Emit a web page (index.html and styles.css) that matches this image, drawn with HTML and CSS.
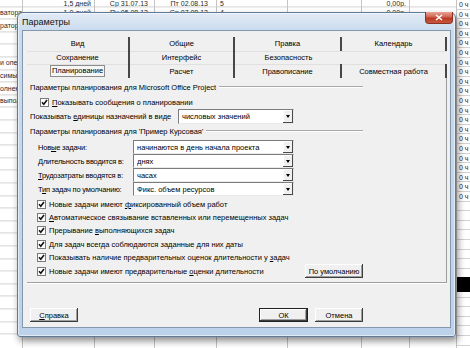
FILE: index.html
```html
<!DOCTYPE html>
<html lang="ru">
<head>
	<meta charset="UTF-8">
	<title>Параметры</title>
	<link rel="stylesheet" href="styles.css">
</head>
<body>
<div class="sheet">
	<div class="col col-a">
		<div class="cell top"></div>
		<div class="cell">ватора</div>
		<div class="cell">ратора</div>
		<div class="cell"></div>
		<div class="cell"></div>
		<div class="cell">и опер</div>
		<div class="cell">симых</div>
		<div class="cell">олнен</div>
		<div class="cell">выпол</div>
	</div>
	<div class="col col-b">
		<div class="cell top r">1,5 дней</div>
		<div class="cell r">1,0 дней</div>
	</div>
	<div class="col col-c">
		<div class="cell top r">Ср 31.07.13</div>
		<div class="cell r">Пн 05.08.13</div>
	</div>
	<div class="col col-d">
		<div class="cell top r">Пт 02.08.13</div>
		<div class="cell r">Ср 07.08.13</div>
	</div>
	<div class="col col-e">
		<div class="cell top">5</div>
		<div class="cell">4</div>
	</div>
	<div class="col col-f"></div>
	<div class="col col-g">
		<div class="cell top r">0,00р.</div>
		<div class="cell r">0,00р.</div>
	</div>
	<div class="col col-h"></div>
	<div class="col col-i">
		<div class="hc">0 ч</div><div class="hc">0 ч</div><div class="hc">0 ч</div>
		<div class="hc">0 ч</div><div class="hc">0 ч</div><div class="hc">0 ч</div>
		<div class="hc">0 ч</div><div class="hc">0 ч</div><div class="hc">0 ч</div>
		<div class="hc">0 ч</div><div class="hc">0 ч</div><div class="hc">0 ч</div>
		<div class="hc">0 ч</div><div class="hc">0 ч</div><div class="hc">0 ч</div>
		<div class="hc">0 ч</div><div class="hc">0 ч</div><div class="hc">0 ч</div>
		<div class="hc">0 ч</div><div class="hc">0 ч</div><div class="hc">0 ч</div>
		<div class="black"></div>
	</div>
</div>

<div class="dialog">
	<div class="titlebar">
		<span class="title">Параметры</span>
		<span class="close"><svg width="8" height="7" viewBox="0 0 8 7"><path d="M1 1l6 5M7 1l-6 5" stroke="#fff" stroke-width="1.6"/></svg></span>
	</div>
	<div class="client">
		<div class="tabs">
			<div class="tab sep line">Вид</div>
			<div class="tab sep line">Общие</div>
			<div class="tab sep line">Правка</div>
			<div class="tab sep line">Календарь</div>
			<div class="tab sep line">Сохранение</div>
			<div class="tab sep line">Интерфейс</div>
			<div class="tab line">Безопасность</div>
			<div class="tab line"></div>
			<div class="tab sep"><span class="current">Планирование</span></div>
			<div class="tab sep">Расчет</div>
			<div class="tab sep">Правописание</div>
			<div class="tab sep">Совместная работа</div>
		</div>

		<div class="panel">
			<div class="group"><span>Параметры планирования для Microsoft Office Project</span><i class="rule"></i></div>
			<div class="check first">
				<svg class="cb" width="9" height="9" viewBox="0 0 9 9"><rect x=".5" y=".5" width="8" height="8" fill="#fff" stroke="#7a7a7a"/><path d="M2 4.2l1.8 2L7 2" fill="none" stroke="#111" stroke-width="1.6"/></svg>
				<span><u>П</u>оказывать сообщения о планировании</span>
			</div>
			<div class="field units">
				<span class="lbl">Показывать <u>е</u>диницы назначений в виде</span>
				<div class="combo"><span class="val">числовых значений</span><b class="arrow"></b></div>
			</div>

			<div class="group"><span>Параметры планирования для 'Пример Курсовая'</span><i class="rule"></i></div>
			<div class="fields">
				<div class="field">
					<span class="lbl">Нов<u>ы</u>е задачи:</span>
					<div class="combo"><span class="val">начинаются в день начала проекта</span><b class="arrow"></b></div>
				</div>
				<div class="field">
					<span class="lbl"><u>Д</u>лительность вводится в:</span>
					<div class="combo"><span class="val">днях</span><b class="arrow"></b></div>
				</div>
				<div class="field">
					<span class="lbl"><u>Т</u>рудозатраты вводятся в:</span>
					<div class="combo"><span class="val">часах</span><b class="arrow"></b></div>
				</div>
				<div class="field">
					<span class="lbl">Т<u>и</u>п задач по умолчанию:</span>
					<div class="combo"><span class="val">Фикс. объем ресурсов</span><b class="arrow"></b></div>
				</div>
			</div>

			<div class="checks">
				<div class="check">
					<svg class="cb" width="9" height="9" viewBox="0 0 9 9"><rect x=".5" y=".5" width="8" height="8" fill="#fff" stroke="#7a7a7a"/><path d="M2 4.2l1.8 2L7 2" fill="none" stroke="#111" stroke-width="1.6"/></svg>
					<span>Новые задачи имеют <u>ф</u>иксированный объем работ</span>
				</div>
				<div class="check">
					<svg class="cb" width="9" height="9" viewBox="0 0 9 9"><rect x=".5" y=".5" width="8" height="8" fill="#fff" stroke="#7a7a7a"/><path d="M2 4.2l1.8 2L7 2" fill="none" stroke="#111" stroke-width="1.6"/></svg>
					<span><u>А</u>втоматическое связывание вставленных или перемещенных задач</span>
				</div>
				<div class="check">
					<svg class="cb" width="9" height="9" viewBox="0 0 9 9"><rect x=".5" y=".5" width="8" height="8" fill="#fff" stroke="#7a7a7a"/><path d="M2 4.2l1.8 2L7 2" fill="none" stroke="#111" stroke-width="1.6"/></svg>
					<span>Прерывание <u>в</u>ыполняющихся задач</span>
				</div>
				<div class="check">
					<svg class="cb" width="9" height="9" viewBox="0 0 9 9"><rect x=".5" y=".5" width="8" height="8" fill="#fff" stroke="#7a7a7a"/><path d="M2 4.2l1.8 2L7 2" fill="none" stroke="#111" stroke-width="1.6"/></svg>
					<span><u>Д</u>ля задач всегда соблюдаются заданные для них даты</span>
				</div>
				<div class="check">
					<svg class="cb" width="9" height="9" viewBox="0 0 9 9"><rect x=".5" y=".5" width="8" height="8" fill="#fff" stroke="#7a7a7a"/><path d="M2 4.2l1.8 2L7 2" fill="none" stroke="#111" stroke-width="1.6"/></svg>
					<span>Показывать наличие предварительных оценок длительности у <u>з</u>адач</span>
				</div>
				<div class="check last">
					<svg class="cb" width="9" height="9" viewBox="0 0 9 9"><rect x=".5" y=".5" width="8" height="8" fill="#fff" stroke="#7a7a7a"/><path d="M2 4.2l1.8 2L7 2" fill="none" stroke="#111" stroke-width="1.6"/></svg>
					<span>Новые задачи имеют предварительные <u>о</u>ценки длительности</span>
					<button class="btn wide">По умолчанию</button>
				</div>
			</div>
		</div>

		<div class="footer">
			<button class="btn"><u>С</u>правка</button>
			<button class="btn ok">ОК</button>
			<button class="btn">Отмена</button>
		</div>
	</div>
</div>
</body>
</html>
```

FILE: styles.css
```css
*{box-sizing:border-box;}
body{margin:0; width:470px; height:348px; overflow:hidden; position:relative; background:#fff; font-family:"Liberation Sans", Arial, sans-serif; color:#000;}
u{text-decoration:underline;}

/* spreadsheet behind the dialog */
.sheet{display:flex; height:348px; overflow:hidden; font-size:7px; color:#2a2a2a;}
.col{flex:none; height:100%; border-right:1px solid #c4c4c4; background-image:repeating-linear-gradient(to bottom, transparent 0, transparent 11.6px, #d2d2d2 11.6px, #d2d2d2 12.6px); background-position:0 -5.6px;}
.col-a{width:23px;}
.col-b{width:72px;}
.col-c{width:60px;}
.col-d{width:62px;}
.col-e{width:71px;}
.col-f{width:74px;}
.col-g{width:48px;}
.col-h{width:47px;}
.col-i{flex:1; border:none; padding-top:0; background-image:repeating-linear-gradient(to bottom, transparent 0, transparent 8.6px, #d2d2d2 8.6px, #d2d2d2 9.6px); background-position:0 0;}
.cell{height:12.6px; line-height:12.6px; white-space:nowrap; overflow:hidden; padding:0 3px;}
.cell.top{height:7px; line-height:7px;}
.col-a .cell{padding:0;}
.cell.r{text-align:right;}
.col-c .cell.r{padding-right:6px;}
.col-d .cell.r{padding-right:8px;}
.hc{height:9.6px; line-height:9.6px; padding-left:2px; white-space:nowrap;}
.black{height:15px; margin-top:76px; background:#000;}

/* dialog window */
.dialog{position:absolute; left:17px; top:12px; width:439px; height:325px; display:flex; flex-direction:column; padding:0 4px 8px 4px; border:1px solid #5d7a99; border-radius:6px 6px 3px 3px; background:linear-gradient(#e2ebf6, #c9dbee 18px, #bcd2ea); box-shadow:2px 4px 7px rgba(0,0,0,.45), inset 0 0 0 1px rgba(255,255,255,.55);}
.titlebar{height:17px; display:flex; align-items:center; flex:none;}
.title{font-size:9px; color:#111;}
.close{margin-left:auto; align-self:flex-start; margin-top:-1px; margin-right:-2px; width:28px; height:12px; display:flex; align-items:center; justify-content:center; border:1px solid #8a3325; border-top:none; border-radius:0 0 4px 4px; background:linear-gradient(#e7a496, #d0644f 45%, #b93a24 55%, #c9553d);}
.client{flex:1; background:#f0f0f0; border:1px solid #8397ad; font-size:7.5px;}

.tabs{margin:6px 0 0 4px; width:420px; display:grid; grid-template-columns:103px 105px 107px 105px; grid-template-rows:13.5px 13.5px 14px;}
.tab{display:flex; align-items:center; justify-content:center; white-space:nowrap;}
.tab.sep{border-right:2px solid #474747;}
.tab.line{box-shadow:0 1px 0 #e0e0e0;}
.current{border:1px solid #8c8c8c; padding:0 1px; line-height:10px; background:#f6f6f6;}

.panel{margin-left:4px; width:420px; height:205px; padding:2px 0 0 3px; border-right:1px solid #9c9c9c; border-bottom:1px solid #a0a0a0; box-shadow:0 1px 0 #fff;}
.group{display:flex; align-items:center; height:14px; width:333px;}
.group span{white-space:nowrap; padding-right:3px;}
.rule{flex:1; height:0; border-top:1px solid #a8a8a8; border-bottom:1px solid #fff;}

.check{display:flex; align-items:center; height:13.4px; white-space:nowrap;}
.check .cb{flex:none; margin-right:3px;}
.check.first{height:13px; margin:2px 0 0 10px;}

.field{display:flex; align-items:center; height:14px;}
.field .lbl{flex:none; width:103px; padding-left:8px; white-space:nowrap; letter-spacing:-.2px;}
.field.units{height:15px;}
.field.units .lbl{width:148px; padding-left:0; letter-spacing:0;}
.fields{margin-top:2px;}
.combo{display:flex; align-items:center; width:161px; height:13.5px; background:#fff; border:1px solid; border-color:#7c7c7c #e9e9e9 #e9e9e9 #7c7c7c; padding-left:3px;}
.units .combo{width:116px; height:14.5px;}
.combo .val{flex:1; white-space:nowrap; overflow:hidden;}
.arrow{flex:none; width:10px; height:100%; display:flex; align-items:center; justify-content:center; background:#f0f0f0; box-shadow:inset -1px -1px #4a4a4a, inset 1px 1px #fff;}
.arrow::after{content:""; border-left:2.5px solid transparent; border-right:2.5px solid transparent; border-top:3px solid #000;}

.checks{margin-top:1.5px; padding-left:7px; width:333px;}
.check.last .btn{margin-left:auto;}

.btn{height:14px; width:48px; padding:0; border:none; background:#f0f0f0; font:7.5px "Liberation Sans", Arial, sans-serif; color:#000; box-shadow:inset -1px -1px #3e3e3e, inset 1px 1px #fff, inset -2px -2px #a0a0a0;}
.btn.wide{width:58px; height:14px;}
.btn.ok{border:1px solid #222; width:49px; margin-left:auto;}
.footer{display:flex; gap:7px; padding:25px 87px 0 7px;}
```
